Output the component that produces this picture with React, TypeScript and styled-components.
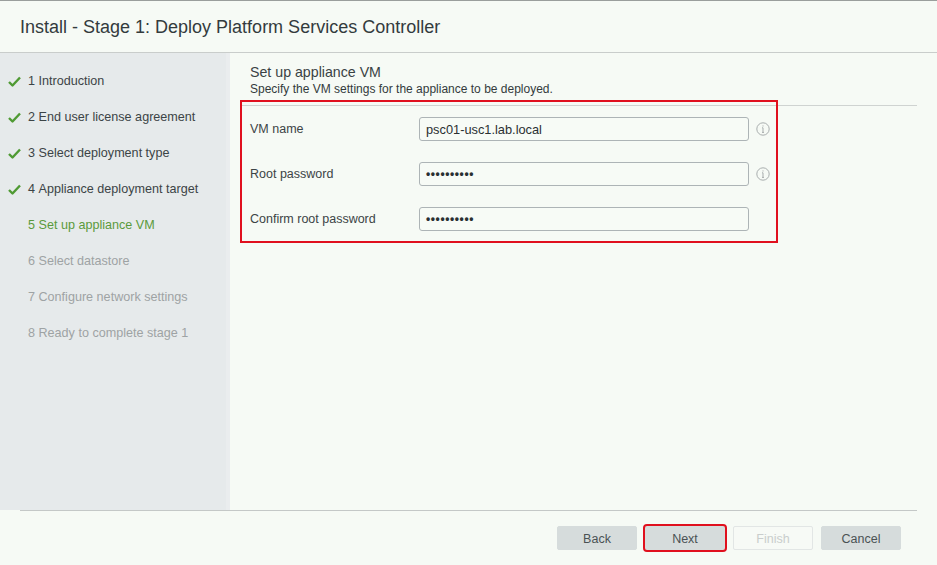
import React from "react";
import styled, { createGlobalStyle } from "styled-components";

const Global = createGlobalStyle`
  html, body { margin: 0; padding: 0; background: #f6faf5; }
  * { box-sizing: border-box; }
  body { font-family: "Liberation Sans", Arial, sans-serif; }
`;

const Window = styled.div`
  width: 937px;
  height: 565px;
  display: flex;
  flex-direction: column;
  border-top: 1px solid #9a9e9c;
  background: #f6faf5;
  overflow: hidden;
`;

const Header = styled.div`
  height: 52px;
  flex: none;
  display: flex;
  align-items: center;
  padding: 2px 0 0 20px;
  border-bottom: 1px solid #c9cdcb;
  font-size: 18px;
  color: #333b3d;
`;

const Body = styled.div`
  flex: 1;
  display: flex;
  min-height: 0;
`;

const Sidebar = styled.div`
  width: 230px;
  flex: none;
  background: #e6eaeb;
  border-right: 4px solid #eaedee;
  padding-top: 10px;
  display: flex;
  flex-direction: column;
`;

const Step = styled.div<{ $state: "done" | "current" | "todo" }>`
  height: 36px;
  display: flex;
  align-items: center;
  padding-left: 8px;
  font-size: 12.6px;
  color: ${(p) =>
    p.$state === "done" ? "#3c4446" : p.$state === "current" ? "#5b9a3c" : "#9ea3a4"};
`;

const CheckSlot = styled.span`
  width: 20px;
  display: inline-flex;
  align-items: center;
`;

const Main = styled.div`
  flex: 1;
  position: relative;
  padding: 11px 20px 0 10px;
`;

const SectionHead = styled.div`
  padding: 0 0 7px 10px;
  border-bottom: 1px solid #cfd3d1;
`;

const SectionTitle = styled.div`
  font-size: 14.2px;
  line-height: 16px;
  color: #3a4244;
`;

const SectionSub = styled.div`
  font-size: 12px;
  line-height: 18px;
  color: #333a3c;
`;

const Form = styled.div`
  display: flex;
  flex-direction: column;
  gap: 21px;
  padding: 11px 0 0 10px;
`;

const Row = styled.div`
  display: flex;
  align-items: center;
  height: 24px;
`;

const Label = styled.div`
  width: 169px;
  font-size: 12.5px;
  color: #3c4446;
  margin-top: -1px;
`;

const Input = styled.div<{ $dots?: boolean }>`
  width: 330px;
  height: 24px;
  border: 1px solid #adb4b6;
  border-radius: 3px;
  background: #f7fbf6;
  display: flex;
  align-items: center;
  padding-left: 6px;
  font-size: ${(p) => (p.$dots ? "12px" : "12.8px")};
  letter-spacing: ${(p) => (p.$dots ? "0.6px" : "0")};
  font-weight: ${(p) => (p.$dots ? "bold" : "normal")};
  color: #2a3032;
`;

const InfoSlot = styled.span`
  width: 28px;
  display: inline-flex;
  justify-content: center;
`;

const Highlight = styled.div<{ $l: number; $t: number; $w: number; $h: number }>`
  position: absolute;
  left: ${(p) => p.$l}px;
  top: ${(p) => p.$t}px;
  width: ${(p) => p.$w}px;
  height: ${(p) => p.$h}px;
  border: 2px solid #e0101e;
  pointer-events: none;
`;

const Footer = styled.div`
  height: 55px;
  flex: none;
  margin: 0 20px;
  border-top: 1px solid #c4c8c7;
  display: flex;
  justify-content: flex-end;
  align-items: flex-start;
  gap: 8px;
  padding: 15px 16px 0 0;
`;

const Button = styled.div<{ $disabled?: boolean; $marked?: boolean }>`
  width: 80px;
  height: 24px;
  border-radius: 2px;
  display: flex;
  align-items: center;
  justify-content: center;
  padding-top: 1px;
  font-size: 12.5px;
  background: ${(p) => (p.$disabled ? "#f7faf6" : "#d6dcdc")};
  border: 1px solid ${(p) => (p.$disabled ? "#e2e6e5" : "#d6dcdc")};
  color: ${(p) => (p.$disabled ? "#c9cdcc" : "#4a5254")};
  outline: ${(p) => (p.$marked ? "2px solid #e0101e" : "none")};
  outline-offset: 0px;
`;

const Check = () => (
  <svg width="13" height="11" viewBox="0 0 13 11">
    <path d="M1 6 L4.5 9.5 L12 1.5" fill="none" stroke="#4f9a33" strokeWidth="2.4" strokeLinejoin="round" />
  </svg>
);

const Info = () => (
  <svg width="14" height="14" viewBox="0 0 14 14">
    <circle cx="7" cy="7" r="6.2" fill="none" stroke="#a9aeae" strokeWidth="1" />
    <path d="M7 3.4 V4.5 M7 5.8 V10.4 M6 10.4 H8 M6 5.8 H7" fill="none" stroke="#a9aeae" strokeWidth="1" />
  </svg>
);

const steps: { n: number; text: string; state: "done" | "current" | "todo" }[] = [
  { n: 1, text: "Introduction", state: "done" },
  { n: 2, text: "End user license agreement", state: "done" },
  { n: 3, text: "Select deployment type", state: "done" },
  { n: 4, text: "Appliance deployment target", state: "done" },
  { n: 5, text: "Set up appliance VM", state: "current" },
  { n: 6, text: "Select datastore", state: "todo" },
  { n: 7, text: "Configure network settings", state: "todo" },
  { n: 8, text: "Ready to complete stage 1", state: "todo" },
];

export default function App() {
  return (
    <>
      <Global />
      <Window>
        <Header>Install - Stage 1: Deploy Platform Services Controller</Header>
        <Body>
          <Sidebar>
            {steps.map((s) => (
              <Step key={s.n} $state={s.state}>
                <CheckSlot>{s.state === "done" ? <Check /> : null}</CheckSlot>
                {s.n}&nbsp;{s.text}
              </Step>
            ))}
          </Sidebar>
          <Main>
            <SectionHead>
              <SectionTitle>Set up appliance VM</SectionTitle>
              <SectionSub>Specify the VM settings for the appliance to be deployed.</SectionSub>
            </SectionHead>
            <Form>
              <Row>
                <Label>VM name</Label>
                <Input>psc01-usc1.lab.local</Input>
                <InfoSlot><Info /></InfoSlot>
              </Row>
              <Row>
                <Label>Root password</Label>
                <Input $dots>••••••••••</Input>
                <InfoSlot><Info /></InfoSlot>
              </Row>
              <Row>
                <Label>Confirm root password</Label>
                <Input $dots>••••••••••</Input>
              </Row>
            </Form>
            <Highlight $l={10} $t={47} $w={538} $h={143} />
          </Main>
        </Body>
        <Footer>
          <Button>Back</Button>
          <Button $marked>Next</Button>
          <Button $disabled>Finish</Button>
          <Button>Cancel</Button>
        </Footer>
      </Window>
    </>
  );
}
